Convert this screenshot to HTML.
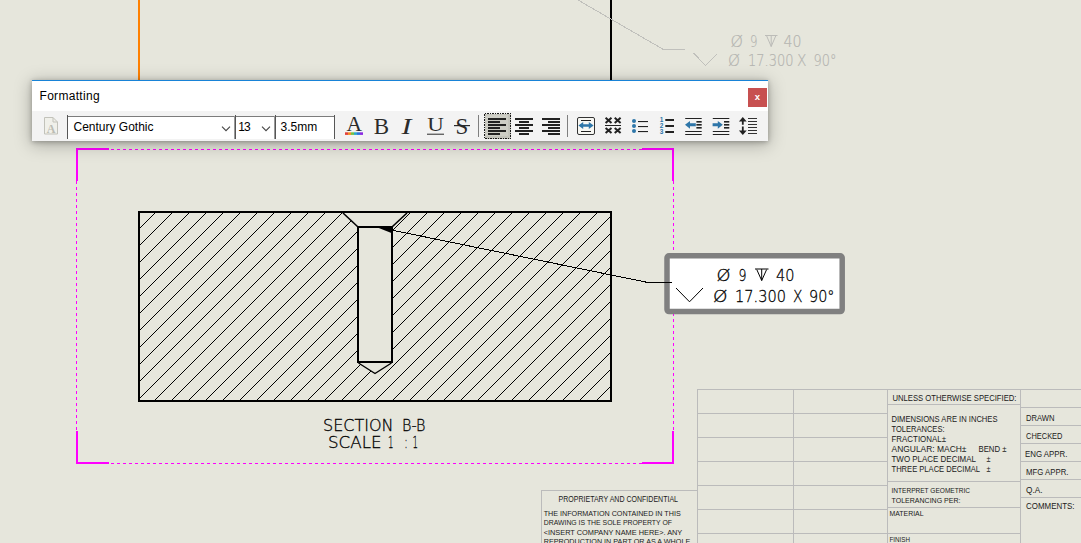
<!DOCTYPE html>
<html><head><meta charset="utf-8"><title>Formatting</title>
<style>
html,body{margin:0;padding:0;}
body{width:1081px;height:543px;overflow:hidden;background:#e6e6dc;position:relative;font-family:"Liberation Sans",sans-serif;}
#tb{position:absolute;left:32px;top:80px;width:736px;height:61px;background:#f3f3f3;box-shadow:0 3px 16px 1px rgba(0,0,0,.26),0 1px 5px rgba(0,0,0,.28);}
#tb .blue{position:absolute;left:0;top:0;width:100%;height:1px;background:#1883d7;}
#tb .title{position:absolute;left:0;top:1px;width:100%;height:30px;background:#fff;}
#tb .title span{position:absolute;left:7.5px;top:8px;font-size:12px;color:#000;letter-spacing:0.3px;}
#tb .close{position:absolute;left:716px;top:8px;width:19px;height:19px;background:#c75050;color:#fff;font-weight:bold;font-size:9.5px;line-height:18px;text-align:center;}
.abs{position:absolute;}
.vd{top:35px;width:1px;height:24px;background:#565656;}
.vl{top:36px;width:1px;height:23px;background:#9a9a9a;}
.ct{position:absolute;font-size:12px;color:#000;line-height:14px;white-space:nowrap;}
</style></head><body>
<svg width="1081" height="543" viewBox="0 0 1081 543" style="position:absolute;left:0;top:0"><g shape-rendering="crispEdges"><rect x="138" y="0" width="2" height="81" fill="#ff8000"/><rect x="610" y="0" width="2" height="81" fill="#000"/><polyline points="578,0 663.5,49.5 685,49.5" fill="none" stroke="#c0c0bc" stroke-width="1"/><polyline points="693.5,53 705.5,65.5 717,54" fill="none" stroke="#c0c0bc" stroke-width="1"/></g><text x="730.5" y="46.5" font-size="16.5" font-family='"DejaVu Sans Light", "DejaVu Sans", "Liberation Sans", sans-serif' fill="#b4b4b0" stroke="#b4b4b0" stroke-width="0.2" textLength="12.5" lengthAdjust="spacingAndGlyphs">Ø</text><text x="750.0" y="46.5" font-size="16.5" font-family='"DejaVu Sans Light", "DejaVu Sans", "Liberation Sans", sans-serif' fill="#b4b4b0" stroke="#b4b4b0" stroke-width="0.2" textLength="7.5" lengthAdjust="spacingAndGlyphs">9</text><path d="M765,35.5 h12.5 M771.2,35.5 v11 M766.7,36 l4.5,10.5 l4.5,-10.5" fill="none" stroke="#bcbcb8" stroke-width="1"/><text x="783.5" y="46.5" font-size="16.5" font-family='"DejaVu Sans Light", "DejaVu Sans", "Liberation Sans", sans-serif' fill="#b4b4b0" stroke="#b4b4b0" stroke-width="0.2" textLength="18.0" lengthAdjust="spacingAndGlyphs">40</text><text x="728.0" y="66.0" font-size="16.5" font-family='"DejaVu Sans Light", "DejaVu Sans", "Liberation Sans", sans-serif' fill="#b4b4b0" stroke="#b4b4b0" stroke-width="0.2" textLength="12.0" lengthAdjust="spacingAndGlyphs">Ø</text><text x="748.0" y="66.0" font-size="16.5" font-family='"DejaVu Sans Light", "DejaVu Sans", "Liberation Sans", sans-serif' fill="#b4b4b0" stroke="#b4b4b0" stroke-width="0.2" textLength="45.5" lengthAdjust="spacingAndGlyphs">17.300</text><text x="797.0" y="66.0" font-size="16.5" font-family='"DejaVu Sans Light", "DejaVu Sans", "Liberation Sans", sans-serif' fill="#b4b4b0" stroke="#b4b4b0" stroke-width="0.2" textLength="9.5" lengthAdjust="spacingAndGlyphs">X</text><text x="813.5" y="66.0" font-size="16.5" font-family='"DejaVu Sans Light", "DejaVu Sans", "Liberation Sans", sans-serif' fill="#b4b4b0" stroke="#b4b4b0" stroke-width="0.2" textLength="23.0" lengthAdjust="spacingAndGlyphs">90°</text><g shape-rendering="crispEdges"><g stroke="#ff00ff" stroke-width="1" stroke-dasharray="3 3" fill="none"><line x1="111" y1="149.5" x2="642" y2="149.5"/><line x1="111" y1="463.5" x2="642" y2="463.5"/><line x1="76.5" y1="181" x2="76.5" y2="432"/><line x1="673.5" y1="181" x2="673.5" y2="432"/></g><g fill="#ff00ff"><rect x="76" y="148" width="33" height="2"/><rect x="76" y="148" width="2" height="33"/><rect x="642" y="148" width="32" height="2"/><rect x="672" y="148" width="2" height="33"/><rect x="76" y="462" width="33" height="2"/><rect x="76" y="431" width="2" height="33"/><rect x="642" y="462" width="32" height="2"/><rect x="672" y="431" width="2" height="33"/></g><g stroke="#000" stroke-width="1"><line x1="140.0" y1="228.0" x2="155.0" y2="213.0"/><line x1="140.0" y1="245.0" x2="172.0" y2="213.0"/><line x1="140.0" y1="262.0" x2="189.0" y2="213.0"/><line x1="140.0" y1="279.0" x2="206.0" y2="213.0"/><line x1="140.0" y1="296.0" x2="223.0" y2="213.0"/><line x1="140.0" y1="313.0" x2="240.0" y2="213.0"/><line x1="140.0" y1="330.0" x2="257.0" y2="213.0"/><line x1="140.0" y1="347.0" x2="274.0" y2="213.0"/><line x1="140.0" y1="364.0" x2="291.0" y2="213.0"/><line x1="140.0" y1="381.0" x2="308.0" y2="213.0"/><line x1="140.0" y1="398.0" x2="325.0" y2="213.0"/><line x1="155.0" y1="400.0" x2="342.0" y2="213.0"/><line x1="172.0" y1="400.0" x2="359.0" y2="213.0"/><line x1="189.0" y1="400.0" x2="376.0" y2="213.0"/><line x1="206.0" y1="400.0" x2="393.0" y2="213.0"/><line x1="223.0" y1="400.0" x2="410.0" y2="213.0"/><line x1="240.0" y1="400.0" x2="427.0" y2="213.0"/><line x1="257.0" y1="400.0" x2="444.0" y2="213.0"/><line x1="274.0" y1="400.0" x2="461.0" y2="213.0"/><line x1="291.0" y1="400.0" x2="478.0" y2="213.0"/><line x1="308.0" y1="400.0" x2="495.0" y2="213.0"/><line x1="325.0" y1="400.0" x2="512.0" y2="213.0"/><line x1="342.0" y1="400.0" x2="529.0" y2="213.0"/><line x1="359.0" y1="400.0" x2="546.0" y2="213.0"/><line x1="376.0" y1="400.0" x2="563.0" y2="213.0"/><line x1="393.0" y1="400.0" x2="580.0" y2="213.0"/><line x1="410.0" y1="400.0" x2="597.0" y2="213.0"/><line x1="427.0" y1="400.0" x2="610.0" y2="217.0"/><line x1="444.0" y1="400.0" x2="610.0" y2="234.0"/><line x1="461.0" y1="400.0" x2="610.0" y2="251.0"/><line x1="478.0" y1="400.0" x2="610.0" y2="268.0"/><line x1="495.0" y1="400.0" x2="610.0" y2="285.0"/><line x1="512.0" y1="400.0" x2="610.0" y2="302.0"/><line x1="529.0" y1="400.0" x2="610.0" y2="319.0"/><line x1="546.0" y1="400.0" x2="610.0" y2="336.0"/><line x1="563.0" y1="400.0" x2="610.0" y2="353.0"/><line x1="580.0" y1="400.0" x2="610.0" y2="370.0"/><line x1="597.0" y1="400.0" x2="610.0" y2="387.0"/></g><polygon points="343,213 358,227 358,362 375,373.5 392,362 392,227 407,213" fill="#e6e6dc"/></g><g shape-rendering="crispEdges" fill="none" stroke="#000"><rect x="139" y="212" width="472" height="189" stroke-width="2"/><line x1="358" y1="226" x2="358" y2="363" stroke-width="2"/><line x1="392" y1="226" x2="392" y2="363" stroke-width="2"/><line x1="357" y1="227" x2="393" y2="227" stroke-width="2"/><line x1="357" y1="362" x2="393" y2="362" stroke-width="2"/></g><g fill="none" stroke="#000"><line x1="343" y1="213" x2="357.5" y2="226.5" stroke-width="1.6"/><line x1="407" y1="213" x2="392.5" y2="226.5" stroke-width="1.6"/><polyline points="358.5,363 375,373.5 391.5,363" stroke-width="1.4"/><polyline points="378,227.3 648,282.5 672,282.5" stroke-width="1" shape-rendering="crispEdges"/><polygon points="377.5,227.5 392,227.5 392,233.3" fill="#000" stroke="none"/></g><text x="323.0" y="431.0" font-size="16.5" font-family='"DejaVu Sans Light", "DejaVu Sans", "Liberation Sans", sans-serif' fill="#000" stroke="#000" stroke-width="0.3" textLength="70.5" lengthAdjust="spacingAndGlyphs">SECTION</text><text x="402.0" y="431.0" font-size="16.5" font-family='"DejaVu Sans Light", "DejaVu Sans", "Liberation Sans", sans-serif' fill="#000" stroke="#000" stroke-width="0.3" textLength="23.5" lengthAdjust="spacingAndGlyphs">B-B</text><text x="328.0" y="447.7" font-size="16.5" font-family='"DejaVu Sans Light", "DejaVu Sans", "Liberation Sans", sans-serif' fill="#000" stroke="#000" stroke-width="0.3" textLength="53.5" lengthAdjust="spacingAndGlyphs">SCALE</text><text x="388.0" y="447.7" font-size="16.5" font-family='"DejaVu Sans Light", "DejaVu Sans", "Liberation Sans", sans-serif' fill="#000" stroke="#000" stroke-width="0.3" textLength="5.5" lengthAdjust="spacingAndGlyphs">1</text><text x="404.5" y="447.7" font-size="16.5" font-family='"DejaVu Sans Light", "DejaVu Sans", "Liberation Sans", sans-serif' fill="#000" stroke="#000" stroke-width="0.3" textLength="3.0" lengthAdjust="spacingAndGlyphs">:</text><text x="412.5" y="447.7" font-size="16.5" font-family='"DejaVu Sans Light", "DejaVu Sans", "Liberation Sans", sans-serif' fill="#000" stroke="#000" stroke-width="0.3" textLength="5.5" lengthAdjust="spacingAndGlyphs">1</text><rect x="667" y="255.85" width="175.2" height="55.7" rx="2" ry="2" fill="#fff" stroke="#808080" stroke-width="5.5"/><line x1="660" y1="282.5" x2="672" y2="282.5" stroke="#000" stroke-width="1" shape-rendering="crispEdges"/><polyline points="676,288 689.5,301.8 703,288" fill="none" stroke="#000" stroke-width="1"/><text x="716.5" y="280.5" font-size="16.5" font-family='"DejaVu Sans Light", "DejaVu Sans", "Liberation Sans", sans-serif' fill="#000" stroke="#000" stroke-width="0.3" textLength="14.0" lengthAdjust="spacingAndGlyphs">Ø</text><text x="738.5" y="280.5" font-size="16.5" font-family='"DejaVu Sans Light", "DejaVu Sans", "Liberation Sans", sans-serif' fill="#000" stroke="#000" stroke-width="0.3" textLength="8.0" lengthAdjust="spacingAndGlyphs">9</text><path d="M755,269 h13.5 M761.7,269 v11.5 M756.8,269.6 l4.9,10.9 l4.9,-10.9" fill="none" stroke="#000" stroke-width="1"/><text x="776.0" y="280.5" font-size="16.5" font-family='"DejaVu Sans Light", "DejaVu Sans", "Liberation Sans", sans-serif' fill="#000" stroke="#000" stroke-width="0.3" textLength="18.5" lengthAdjust="spacingAndGlyphs">40</text><text x="713.0" y="301.5" font-size="16.5" font-family='"DejaVu Sans Light", "DejaVu Sans", "Liberation Sans", sans-serif' fill="#000" stroke="#000" stroke-width="0.3" textLength="14.5" lengthAdjust="spacingAndGlyphs">Ø</text><text x="735.0" y="301.5" font-size="16.5" font-family='"DejaVu Sans Light", "DejaVu Sans", "Liberation Sans", sans-serif' fill="#000" stroke="#000" stroke-width="0.3" textLength="51.0" lengthAdjust="spacingAndGlyphs">17.300</text><text x="793.0" y="301.5" font-size="16.5" font-family='"DejaVu Sans Light", "DejaVu Sans", "Liberation Sans", sans-serif' fill="#000" stroke="#000" stroke-width="0.3" textLength="9.5" lengthAdjust="spacingAndGlyphs">X</text><text x="809.0" y="301.5" font-size="16.5" font-family='"DejaVu Sans Light", "DejaVu Sans", "Liberation Sans", sans-serif' fill="#000" stroke="#000" stroke-width="0.3" textLength="25.5" lengthAdjust="spacingAndGlyphs">90°</text><g shape-rendering="crispEdges" stroke="#bbbbbb" stroke-width="1" fill="none"><line x1="697" y1="389.5" x2="888" y2="389.5"/><line x1="697" y1="413.5" x2="888" y2="413.5"/><line x1="697" y1="437.5" x2="888" y2="437.5"/><line x1="697" y1="461.5" x2="888" y2="461.5"/><line x1="697" y1="485.5" x2="888" y2="485.5"/><line x1="697" y1="509.5" x2="888" y2="509.5"/><line x1="697" y1="533.5" x2="888" y2="533.5"/><line x1="697.5" y1="389" x2="697.5" y2="543"/><line x1="793.5" y1="389" x2="793.5" y2="543"/><line x1="887.5" y1="389" x2="887.5" y2="543"/><line x1="1020.5" y1="389" x2="1020.5" y2="543"/><line x1="888" y1="389.5" x2="1021" y2="389.5"/><line x1="888" y1="404.5" x2="1021" y2="404.5"/><line x1="888" y1="481.5" x2="1021" y2="481.5"/><line x1="888" y1="507.5" x2="1021" y2="507.5"/><line x1="888" y1="533.5" x2="1021" y2="533.5"/><line x1="1021" y1="389.5" x2="1081" y2="389.5"/><line x1="1021" y1="407.5" x2="1081" y2="407.5"/><line x1="1021" y1="425.5" x2="1081" y2="425.5"/><line x1="1021" y1="443.5" x2="1081" y2="443.5"/><line x1="1021" y1="461.5" x2="1081" y2="461.5"/><line x1="1021" y1="479.5" x2="1081" y2="479.5"/><line x1="1021" y1="497.5" x2="1081" y2="497.5"/><polyline points="541.5,543 541.5,490.5 697,490.5"/></g><text x="892.5" y="401.2" font-size="8.3" font-family='"Liberation Sans", sans-serif' fill="#1a1a1a" textLength="124.0" lengthAdjust="spacingAndGlyphs">UNLESS OTHERWISE SPECIFIED:</text><text x="891.5" y="422.2" font-size="8.3" font-family='"Liberation Sans", sans-serif' fill="#1a1a1a" textLength="106.0" lengthAdjust="spacingAndGlyphs">DIMENSIONS ARE IN INCHES</text><text x="891.5" y="432.2" font-size="8.3" font-family='"Liberation Sans", sans-serif' fill="#1a1a1a" textLength="53.0" lengthAdjust="spacingAndGlyphs">TOLERANCES:</text><text x="891.5" y="442.2" font-size="8.3" font-family='"Liberation Sans", sans-serif' fill="#1a1a1a" textLength="54.5" lengthAdjust="spacingAndGlyphs">FRACTIONAL±</text><text x="891.5" y="452.2" font-size="8.3" font-family='"Liberation Sans", sans-serif' fill="#1a1a1a" textLength="75.0" lengthAdjust="spacingAndGlyphs">ANGULAR: MACH±</text><text x="978.5" y="452.2" font-size="8.3" font-family='"Liberation Sans", sans-serif' fill="#1a1a1a" textLength="28.0" lengthAdjust="spacingAndGlyphs">BEND ±</text><text x="891.5" y="462.2" font-size="8.3" font-family='"Liberation Sans", sans-serif' fill="#1a1a1a" textLength="84.5" lengthAdjust="spacingAndGlyphs">TWO PLACE DECIMAL</text><text x="986.5" y="462.2" font-size="8.3" font-family='"Liberation Sans", sans-serif' fill="#1a1a1a" textLength="4.0" lengthAdjust="spacingAndGlyphs">±</text><text x="891.5" y="472.2" font-size="8.3" font-family='"Liberation Sans", sans-serif' fill="#1a1a1a" textLength="88.5" lengthAdjust="spacingAndGlyphs">THREE PLACE DECIMAL</text><text x="986.5" y="472.2" font-size="8.3" font-family='"Liberation Sans", sans-serif' fill="#1a1a1a" textLength="4.0" lengthAdjust="spacingAndGlyphs">±</text><text x="891.5" y="493.2" font-size="7.6" font-family='"Liberation Sans", sans-serif' fill="#1a1a1a" textLength="78.5" lengthAdjust="spacingAndGlyphs">INTERPRET GEOMETRIC</text><text x="891.5" y="503.2" font-size="7.6" font-family='"Liberation Sans", sans-serif' fill="#1a1a1a" textLength="69.0" lengthAdjust="spacingAndGlyphs">TOLERANCING PER:</text><text x="889.5" y="516.2" font-size="7.6" font-family='"Liberation Sans", sans-serif' fill="#1a1a1a" textLength="34.0" lengthAdjust="spacingAndGlyphs">MATERIAL</text><text x="889.5" y="542.0" font-size="7.6" font-family='"Liberation Sans", sans-serif' fill="#1a1a1a" textLength="20.5" lengthAdjust="spacingAndGlyphs">FINISH</text><text x="1026.0" y="421.0" font-size="8.3" font-family='"Liberation Sans", sans-serif' fill="#1a1a1a" textLength="28.5" lengthAdjust="spacingAndGlyphs">DRAWN</text><text x="1026.0" y="439.0" font-size="8.3" font-family='"Liberation Sans", sans-serif' fill="#1a1a1a" textLength="36.5" lengthAdjust="spacingAndGlyphs">CHECKED</text><text x="1025.0" y="457.1" font-size="8.3" font-family='"Liberation Sans", sans-serif' fill="#1a1a1a" textLength="42.5" lengthAdjust="spacingAndGlyphs">ENG APPR.</text><text x="1026.0" y="475.1" font-size="8.3" font-family='"Liberation Sans", sans-serif' fill="#1a1a1a" textLength="42.5" lengthAdjust="spacingAndGlyphs">MFG APPR.</text><text x="1026.0" y="493.0" font-size="8.3" font-family='"Liberation Sans", sans-serif' fill="#1a1a1a" textLength="16.5" lengthAdjust="spacingAndGlyphs">Q.A.</text><text x="1026.0" y="509.1" font-size="8.3" font-family='"Liberation Sans", sans-serif' fill="#1a1a1a" textLength="48.5" lengthAdjust="spacingAndGlyphs">COMMENTS:</text><text x="558.5" y="502.2" font-size="8.3" font-family='"Liberation Sans", sans-serif' fill="#1a1a1a" textLength="119.5" lengthAdjust="spacingAndGlyphs">PROPRIETARY AND CONFIDENTIAL</text><text x="543.7" y="516.2" font-size="7.6" font-family='"Liberation Sans", sans-serif' fill="#1a1a1a" textLength="137.0" lengthAdjust="spacingAndGlyphs">THE INFORMATION CONTAINED IN THIS</text><text x="543.7" y="525.4" font-size="7.6" font-family='"Liberation Sans", sans-serif' fill="#1a1a1a" textLength="128.3" lengthAdjust="spacingAndGlyphs">DRAWING IS THE SOLE PROPERTY OF</text><text x="543.7" y="535.2" font-size="7.6" font-family='"Liberation Sans", sans-serif' fill="#1a1a1a" textLength="138.6" lengthAdjust="spacingAndGlyphs">&lt;INSERT COMPANY NAME HERE&gt;. ANY</text><text x="543.7" y="544.4" font-size="7.6" font-family='"Liberation Sans", sans-serif' fill="#1a1a1a" textLength="146.5" lengthAdjust="spacingAndGlyphs">REPRODUCTION IN PART OR AS A WHOLE</text></svg>
<div id="tb">
<div class="title"><span>Formatting</span></div>
<div class="blue"></div>
<div class="close">x</div>
<div class="abs" style="left:36px;top:37px;width:266px;height:22px;background:#fff;"></div>
<div class="abs" style="left:35px;top:36px;width:268px;height:1px;background:#7c7c7c;"></div>
<div class="abs vd" style="left:35px;"></div><div class="abs vd" style="left:203px;"></div><div class="abs vd" style="left:243px;"></div><div class="abs vd" style="left:302px;"></div>
<div class="abs vl" style="left:202px;"></div><div class="abs vl" style="left:242px;"></div>
<span class="ct" style="left:41.5px;top:39.5px;">Century Gothic</span>
<span class="ct" style="left:206.3px;top:39.8px;letter-spacing:-0.9px;">13</span>
<span class="ct" style="left:248.6px;top:39.6px;">3.5mm</span>
</div>
<svg width="1081" height="543" viewBox="0 0 1081 543" style="position:absolute;left:0;top:0"><path d="M44.5,117.5 h8.5 l4.5,4.5 v12 h-13 z" fill="#f0f0ea" stroke="#c2c2ba" stroke-width="1"/><path d="M53,117.5 v4.5 h4.5" fill="none" stroke="#c2c2ba" stroke-width="1"/><text x="51" y="132.6" font-size="12" font-weight="bold" text-anchor="middle" font-family='"Liberation Serif", serif' fill="#bcbcb4">A</text><text x="354.2" y="130.9" font-size="21.5" text-anchor="middle" font-family='"Liberation Serif", serif' fill="#2b2b2b">A</text><rect x="345" y="132.3" width="3" height="2.6" fill="#e2403a"/><rect x="348" y="132.3" width="3" height="2.6" fill="#f68b1f"/><rect x="351" y="132.3" width="3" height="2.6" fill="#72bf44"/><rect x="354" y="132.3" width="3" height="2.6" fill="#2aa7c9"/><rect x="357" y="132.3" width="3" height="2.6" fill="#2d6fdc"/><rect x="360" y="132.3" width="3" height="2.6" fill="#8a2be2"/><text x="381.3" y="133.7" font-size="23" text-anchor="middle" font-family='"Liberation Serif", serif' fill="#2b2b2b">B</text><text x="401.6" y="133.7" font-size="23" textLength="10" lengthAdjust="spacingAndGlyphs" font-style="italic" font-family='"Liberation Serif", serif' fill="#2b2b2b">I</text><text x="427.2" y="131.2" font-size="19.5" textLength="16.6" lengthAdjust="spacingAndGlyphs" font-family='"Liberation Serif", serif' fill="#2b2b2b">U</text><rect x="427" y="133.7" width="17" height="1" fill="#2b2b2b"/><text x="462" y="133.7" font-size="23" text-anchor="middle" font-family='"Liberation Serif", serif' fill="#2b2b2b">S</text><rect x="454" y="125" width="16" height="1.2" fill="#2b2b2b"/><rect x="478" y="115" width="1" height="22" fill="#7f7f7f"/><rect x="567" y="115" width="1" height="22" fill="#7f7f7f"/><rect x="484.5" y="113.5" width="26" height="25" fill="#c3c3bb" stroke="#1a1a1a" stroke-width="1" stroke-dasharray="1.5 1" shape-rendering="crispEdges"/><rect x="486" y="115" width="22" height="21" fill="#cdcdc5"/><rect x="488" y="118" width="18" height="2" fill="#222"/><rect x="488" y="121" width="12" height="2" fill="#222"/><rect x="488" y="124" width="18" height="2" fill="#222"/><rect x="488" y="127" width="12" height="2" fill="#222"/><rect x="488" y="130" width="18" height="2" fill="#222"/><rect x="488" y="133" width="12" height="2" fill="#222"/><rect x="515" y="118" width="18" height="2" fill="#222"/><rect x="519" y="121" width="10" height="2" fill="#222"/><rect x="515" y="124" width="18" height="2" fill="#222"/><rect x="519" y="127" width="10" height="2" fill="#222"/><rect x="515" y="130" width="18" height="2" fill="#222"/><rect x="519" y="133" width="10" height="2" fill="#222"/><rect x="542" y="118" width="18" height="2" fill="#222"/><rect x="548" y="121" width="12" height="2" fill="#222"/><rect x="542" y="124" width="18" height="2" fill="#222"/><rect x="548" y="127" width="12" height="2" fill="#222"/><rect x="542" y="130" width="18" height="2" fill="#222"/><rect x="548" y="133" width="12" height="2" fill="#222"/><rect x="577.5" y="117.5" width="17" height="17" rx="1.5" fill="#f7f7f3" stroke="#333" stroke-width="1"/><rect x="581" y="120" width="10" height="1" fill="#222"/><rect x="581" y="131" width="10" height="1" fill="#222"/><path d="M578.4,125.5 l4.8,-3.6 v2.3 h5.6 v-2.3 l4.8,3.6 l-4.8,3.6 v-2.3 h-5.6 v2.3 z" fill="#2e76a9"/><path d="M605.6,117.7 l5.9,5.2 M611.5,117.7 l-5.9,5.2" stroke="#222" stroke-width="2" fill="none"/><path d="M614.7,117.7 l5.9,5.2 M620.6,117.7 l-5.9,5.2" stroke="#222" stroke-width="2" fill="none"/><path d="M605.6,127.9 l5.9,5.2 M611.5,127.9 l-5.9,5.2" stroke="#222" stroke-width="2" fill="none"/><path d="M614.7,127.9 l5.9,5.2 M620.6,127.9 l-5.9,5.2" stroke="#222" stroke-width="2" fill="none"/><rect x="605" y="125" width="16" height="1" fill="#222"/><circle cx="634" cy="121.1" r="2" fill="#2e76a9"/><rect x="638" y="121" width="10" height="1.1" fill="#222"/><circle cx="634" cy="126.1" r="2" fill="#2e76a9"/><rect x="638" y="126" width="10" height="1.1" fill="#222"/><circle cx="634" cy="131.1" r="2" fill="#2e76a9"/><rect x="638" y="131" width="10" height="1.1" fill="#222"/><text x="659.8" y="122.4" font-size="6.5" font-weight="bold" font-family='"Liberation Sans", sans-serif' fill="#2e76a9">1</text><rect x="665.3" y="119" width="8.7" height="2" fill="#222"/><text x="659.8" y="128.4" font-size="6.5" font-weight="bold" font-family='"Liberation Sans", sans-serif' fill="#2e76a9">2</text><rect x="665.3" y="125" width="8.7" height="2" fill="#222"/><text x="659.8" y="134.4" font-size="6.5" font-weight="bold" font-family='"Liberation Sans", sans-serif' fill="#2e76a9">3</text><rect x="665.3" y="131" width="8.7" height="2" fill="#222"/><rect x="685.2" y="118" width="16.5" height="1" fill="#222"/><rect x="685.2" y="131" width="16.5" height="1" fill="#222"/><rect x="685.2" y="134" width="16.5" height="1" fill="#222"/><rect x="696.4000000000001" y="121" width="5.3" height="1.6" fill="#222"/><rect x="696.4000000000001" y="124" width="5.3" height="1.6" fill="#222"/><rect x="696.4000000000001" y="127" width="5.3" height="1.6" fill="#222"/><path d="M685.0,124.8 l5,-3.9 v2.4 h5.8 v3 h-5.8 v2.4 z" fill="#2e76a9"/><rect x="712.8" y="118" width="16.5" height="1" fill="#222"/><rect x="712.8" y="131" width="16.5" height="1" fill="#222"/><rect x="712.8" y="134" width="16.5" height="1" fill="#222"/><rect x="724.0" y="121" width="5.3" height="1.6" fill="#222"/><rect x="724.0" y="124" width="5.3" height="1.6" fill="#222"/><rect x="724.0" y="127" width="5.3" height="1.6" fill="#222"/><path d="M722.8,124.8 l-5,-3.9 v2.4 h-5.2 v3 h5.2 v2.4 z" fill="#2e76a9"/><path d="M742.8,117 l3.9,4.6 h-3 v3.1 h-1.8 v-3.1 h-3 z M742.8,135 l3.9,-4.6 h-3 v-3.9 h-1.8 v3.9 h-3 z" fill="#222"/><rect x="748" y="118" width="9" height="1" fill="#333"/><rect x="748" y="121" width="9" height="1" fill="#333"/><rect x="748" y="124" width="9" height="1" fill="#333"/><rect x="748" y="127" width="9" height="1" fill="#333"/><rect x="748" y="130" width="9" height="1" fill="#333"/><rect x="748" y="133" width="9" height="1" fill="#333"/><path d="M222,126.6 l4,4 l4,-4" fill="none" stroke="#444" stroke-width="1.1"/><path d="M262,126.6 l4,4 l4,-4" fill="none" stroke="#444" stroke-width="1.1"/></svg>
</body></html>
